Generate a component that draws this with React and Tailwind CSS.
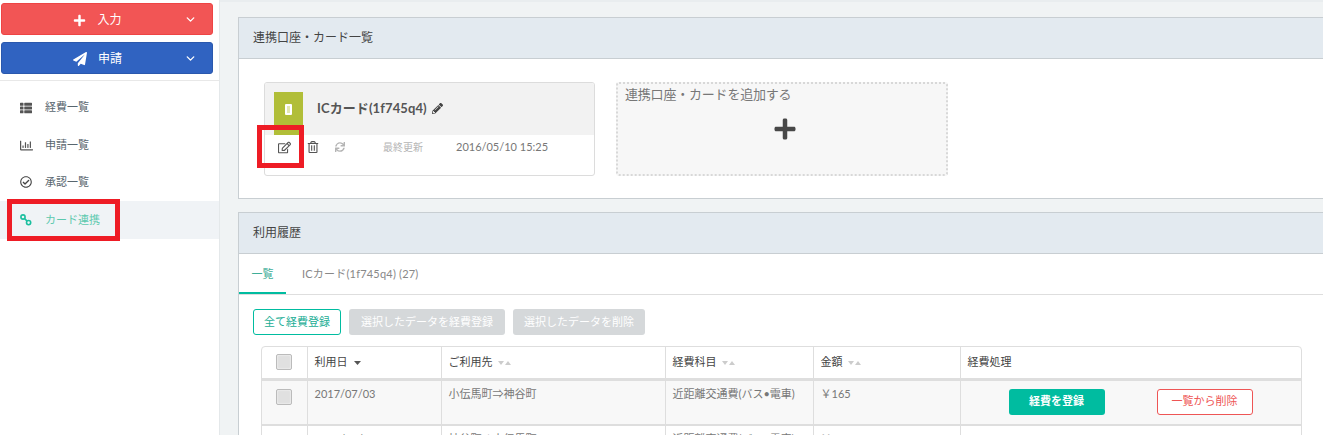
import React from 'react'
import { FaPlus, FaPaperPlane, FaThList, FaRegChartBar, FaRegCheckCircle, FaPencilAlt, FaRegEdit, FaRegTrashAlt, FaSync } from 'react-icons/fa'
import { ChevronDown } from 'lucide-react'

const font = 'font-[Lato,"Noto_Sans_CJK_JP",sans-serif]'

const SideButton = ({ color, icon, label }) => (
    <div className={`relative ml-px mr-[6px] flex h-[32px] items-center justify-center gap-[11px] rounded-[3px] border pr-[19px] pt-[2px] text-[12px] text-white ${color}`}>
        {icon}
        <span>{label}</span>
        <ChevronDown size={13} strokeWidth={2.5} className="absolute right-[15px] top-[9px]" />
    </div>
)

const NavItem = ({ icon, label, active }) => (
    <div className={`flex h-[37.4px] items-center pl-[20px] text-[11px] ${active ? 'bg-[#f0f3f6] text-[#5cc9ae]' : 'text-[#58666e]'}`}>
        <span className="flex w-[25px] items-center">{icon}</span>
        <span>{label}</span>
    </div>
)

const Sort = ({ active }) => (
    active
        ? <svg width="7" height="4" viewBox="0 0 7 4" className="ml-[6px] inline-block"><path d="M0 0h7L3.5 4z" fill="#555" /></svg>
        : <svg width="13" height="4" viewBox="0 0 13 4" className="ml-[5px] inline-block"><path d="M0 0h6L3 4zM7 4h6L10 0z" fill="#ccc" /></svg>
)

const Checkbox = () => (
    <div className="mx-auto h-[16px] w-[16px] rounded-[2px] border border-[#bbb] bg-[#e0e0e0] shadow-[inset_0_0_2px_#fff]" />
)

const Panel = ({ title, children, className }) => (
    <div className={`ml-[18px] w-[1120px] border border-[#c8ced2] bg-white ${className}`}>
        <div className="flex h-[41px] items-center border-b border-[#c8ced2] bg-[#e3eaf0] pl-[14px] text-[12px] text-[#444]">{title}</div>
        {children}
    </div>
)

const th = 'border-r border-b-[3px] border-[#dedede] px-[7px] text-left font-normal text-[11px] text-[#444]'
const td = 'border-r border-b-2 border-[#dedede] px-[7px] pt-[5px] align-top text-[11px] text-[#777]'

export default function App() {
    return (
        <div className={`flex h-[435px] w-[1323px] overflow-hidden bg-[#f0f3f4] ${font}`}>
            <aside className="relative h-full w-[220px] shrink-0 border-r border-[#e4e8ea] bg-white">
                <div className="flex flex-col gap-[7px] pt-[3px]">
                    <SideButton color="bg-[#f25555] border-[#ee4444]" icon={<FaPlus size={13} />} label="入力" />
                    <SideButton color="bg-[#3063c1] border-[#2a58ad]" icon={<FaPaperPlane size={14} />} label="申請" />
                </div>
                <div className="mt-[6px] border-t border-[#e8e8e8] pt-[8px]">
                    <NavItem icon={<FaThList size={12} className="text-[#555]" />} label="経費一覧" />
                    <NavItem icon={<FaRegChartBar size={13} className="text-[#555]" />} label="申請一覧" />
                    <NavItem icon={<FaRegCheckCircle size={12} className="text-[#444]" />} label="承認一覧" />
                    <NavItem
                        active
                        icon={
                            <svg width="12" height="12" viewBox="0 0 12 12" fill="none" stroke="#1bbf9f" strokeWidth="1.6">
                                <circle cx="3" cy="3" r="2.1" />
                                <circle cx="8.6" cy="8.6" r="2.1" />
                                <path d="M4.5 4.5l2.6 2.6" />
                            </svg>
                        }
                        label="カード連携"
                    />
                </div>
                <div className="absolute left-[7px] top-[199px] h-[42px] w-[113px] border-[5px] border-[#ee1c25]" />
            </aside>

            <main className="relative min-w-0 flex-1 border-t-2 border-[#e9edef] pt-[15px]">
                <Panel title="連携口座・カード一覧" className="h-[182px]">
                    <div className="flex gap-[21px] pl-[25px] pt-[23px]">
                        <div className="h-[94px] w-[331px] overflow-hidden rounded-[3px] border border-[#dcdcdc]">
                            <div className="flex h-[52px] items-start bg-[#f2f2f2] pl-[9px]">
                                <div className="mt-[9px] flex h-[43px] w-[29px] justify-center bg-[#b1be38] pt-[12px]">
                                    <div className="h-[11px] w-[7px] rounded-[1px] border-2 border-[#fff] bg-[#e4e8b0]" />
                                </div>
                                <div className="ml-[14px] mt-[16px] flex items-center gap-[5px] text-[13px] font-bold text-[#555]">
                                    <span className="tracking-[0.1px]">ICカード(1f745q4)</span>
                                    <FaPencilAlt size={11} className="text-[#444]" />
                                </div>
                            </div>
                            <div className="flex items-center pl-[13px] pt-[4px] text-[11px]">
                                <FaRegEdit size={13} className="text-[#555]" />
                                <FaRegTrashAlt size={12} className="ml-[16px] text-[#555]" />
                                <FaSync size={10} className="ml-[16px] text-[#b5b5b5]" />
                                <span className="ml-[38px] text-[10px] text-[#b5b5b5]">最終更新</span>
                                <span className="ml-[33px] text-[#777]">2016/05/10 15:25</span>
                            </div>
                        </div>
                        <div className="h-[94px] w-[332px] rounded-[3px] border-2 border-dotted border-[#d8d8d8] bg-[#f7f7f7] px-[7px]">
                            <div className="text-[13px] leading-[20px] tracking-[-0.2px] text-[#777]">連携口座・カードを追加する</div>
                            <div className="flex justify-center pl-[5px] pt-[13px]">
                                <FaPlus size={24} className="text-[#484848]" />
                            </div>
                        </div>
                    </div>
                </Panel>

                <Panel title="利用履歴" className="mt-[13px] h-[300px]">
                    <div className="flex h-[41px] items-center border-b border-[#dedede] text-[11px]">
                        <div className="flex h-full w-[47px] items-center justify-center border-b-2 border-[#00bca0] pt-[3px] text-[#3fae98]">一覧</div>
                        <div className="ml-[16px] pt-[1px] tracking-[0.2px] text-[#888]">ICカード(1f745q4) (27)</div>
                    </div>
                    <div className="flex gap-[8px] pl-[14px] pt-[14px] text-[11px]">
                        <div className="flex h-[26px] w-[88px] items-center justify-center rounded-[3px] border border-[#00bca0] text-[#19ad94]">全て経費登録</div>
                        <div className="flex h-[26px] w-[156px] items-center justify-center rounded-[3px] bg-[#d5d8da] text-white">選択したデータを経費登録</div>
                        <div className="flex h-[26px] w-[132px] items-center justify-center rounded-[3px] bg-[#d5d8da] text-white">選択したデータを削除</div>
                    </div>
                    <div className="ml-[22px] mt-[11px] w-[1041px] overflow-hidden rounded-[4px] border border-[#dedede]">
                        <table className="w-full table-fixed border-collapse">
                            <colgroup>
                                <col className="w-[45px]" />
                                <col className="w-[134px]" />
                                <col className="w-[224px]" />
                                <col className="w-[148px]" />
                                <col className="w-[147px]" />
                                <col />
                            </colgroup>
                            <thead>
                                <tr className="h-[32px]">
                                    <th className={th}><Checkbox /></th>
                                    <th className={th}>利用日<Sort active /></th>
                                    <th className={th}>ご利用先<Sort /></th>
                                    <th className={th}>経費科目<Sort /></th>
                                    <th className={th}>金額<Sort /></th>
                                    <th className={`${th} border-r-0`}>経費処理</th>
                                </tr>
                            </thead>
                            <tbody>
                                <tr className="h-[46px] bg-[#f8f8f8]">
                                    <td className={td}><div className="pt-[3px]"><Checkbox /></div></td>
                                    <td className={td}>2017/07/03</td>
                                    <td className={td}>小伝馬町⇒神谷町</td>
                                    <td className={td}>近距離交通費(バス•電車)</td>
                                    <td className={td}>￥165</td>
                                    <td className={`${td} border-r-0`}>
                                        <div className="flex pl-[41px] pt-[3px]">
                                            <div className="flex h-[26px] w-[96px] items-center justify-center rounded-[3px] bg-[#00bca0] font-bold text-white">経費を登録</div>
                                            <div className="ml-[52px] flex h-[26px] w-[96px] items-center justify-center rounded-[3px] border border-[#ee5555] bg-white text-[#ee5555]">一覧から削除</div>
                                        </div>
                                    </td>
                                </tr>
                                <tr className="h-[46px]">
                                    <td className={td}><div className="pt-[5px]"><Checkbox /></div></td>
                                    <td className={td}>2017/07/03</td>
                                    <td className={td}>神谷町⇒小伝馬町</td>
                                    <td className={td}>近距離交通費(バス•電車)</td>
                                    <td className={td}>￥165</td>
                                    <td className={`${td} border-r-0`} />
                                </tr>
                            </tbody>
                        </table>
                    </div>
                </Panel>
                <div className="absolute left-[37px] top-[123px] h-[43px] w-[47px] border-[5px] border-[#ee1c25]" />
            </main>
        </div>
    )
}
